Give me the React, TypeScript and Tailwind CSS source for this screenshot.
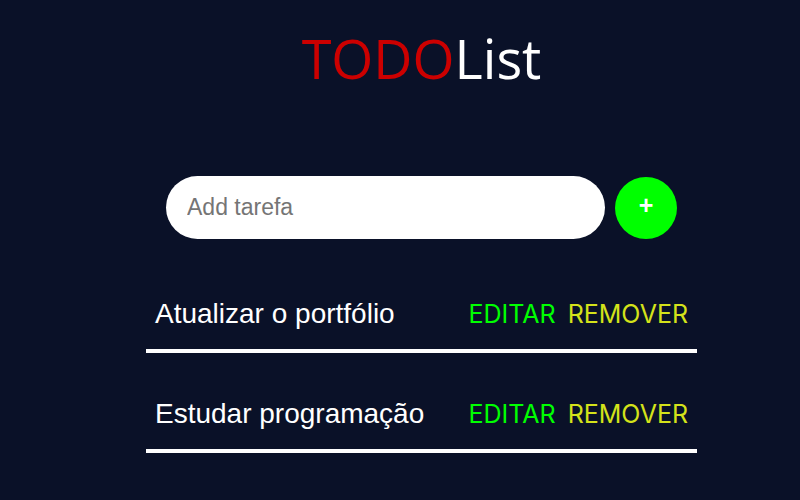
import { useState } from "react";

const initialTasks = ["Atualizar o portfólio", "Estudar programação"];

export default function App() {
    const [tasks] = useState<string[]>(initialTasks);
    const [value, setValue] = useState("");

    return (
        <div className="min-h-[500px] w-full bg-[#0a1128] flex flex-col items-center pl-[43px]">
            <h1 className="mt-[22px] text-[54px] leading-[72px] font-medium font-['Open_Sans',sans-serif]">
                <span className="text-[#cc0000]">TODO</span>
                <span className="text-white">List</span>
            </h1>

            <div className="mt-[82px] flex items-center gap-[10px]">
                <input
                    value={value}
                    onChange={(e) => setValue(e.target.value)}
                    placeholder="Add tarefa"
                    className="w-[439px] h-[63px] rounded-full bg-white px-[21px] text-[23px] text-black placeholder:text-[#757575] outline-none font-['Liberation_Sans',Arial,sans-serif]"
                />
                <button className="w-[62px] h-[62px] rounded-full bg-[#00ff00] text-white text-[25px] font-bold leading-none flex items-center justify-center pb-[4px] font-['Liberation_Sans',Arial,sans-serif]">
                    +
                </button>
            </div>

            <ul className="mt-[14px] w-[551px]">
                {tasks.map((task) => (
                    <li
                        key={task}
                        className="h-[100px] border-b-4 border-white flex items-end justify-between px-[9px] pb-[20px]"
                    >
                        <span className="text-white text-[28px] leading-[30px] font-['Liberation_Sans',Arial,sans-serif]">
                            {task}
                        </span>
                        <div className="flex gap-[12px] text-[25px] leading-[30px] font-['Inter',sans-serif]">
                            <button className="text-[#00ff00]">EDITAR</button>
                            <button className="text-[#d4e21a]">REMOVER</button>
                        </div>
                    </li>
                ))}
            </ul>
        </div>
    );
}
